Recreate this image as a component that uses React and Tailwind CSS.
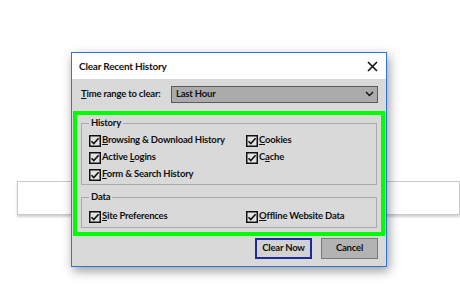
import React from "react";

function Check() {
  return (
    <svg width="12" height="12" viewBox="0 0 12 12" className="shrink-0">
      <rect x="0.75" y="0.75" width="10.5" height="10.5" fill="#e4e4e4" stroke="#111" strokeWidth="1.5" />
      <path d="M2.5 6.2 L4.8 8.6 L9.6 3.2" fill="none" stroke="#111" strokeWidth="1.6" />
    </svg>
  );
}

function Item({ pre = "", k, rest }) {
  return (
    <label className="flex items-center gap-[1px] h-[17px] whitespace-nowrap">
      <Check />
      <span>
        {pre}
        <span className="underline underline-offset-1">{k}</span>
        {rest}
      </span>
    </label>
  );
}

export default function App() {
  return (
    <div className="relative w-[460px] h-[291px] bg-white overflow-hidden font-['Lato',sans-serif] text-[9.5px] tracking-[-0.2px] font-bold text-[#111]">
      {/* page behind the dialog */}
      <div className="pt-[181px] pl-[17px]">
        <div className="h-[34px] border border-[#c9c9c9] bg-white shadow-[0_2px_2px_rgba(0,0,0,0.18)]" />
      </div>

      <div className="absolute left-[71px] top-[52px] w-[316px] h-[215px] border border-[#2f74d8] bg-[#d9d9d9] shadow-[2px_4px_10px_rgba(0,0,0,0.4)] flex flex-col">
        <div className="h-[26px] bg-white flex items-center justify-between pl-[7px] pr-[8px]">
          <span className="text-[10px]">Clear Recent History</span>
          <svg width="11" height="11" viewBox="0 0 11 11">
            <path d="M1 1 L10 10 M10 1 L1 10" stroke="#111" strokeWidth="1.6" />
          </svg>
        </div>

        <div className="flex items-center pl-[9px] pr-[8px] pt-[6px] h-[24px] whitespace-nowrap">
          <span className="w-[90px]">
            <span className="underline underline-offset-1">T</span>ime range to clear:
          </span>
          <div className="flex-1 h-[17px] border border-[#5a5a5a] bg-[#ababab] flex items-center justify-between pl-[4px] pr-[3px]">
            <span>Last Hour</span>
            <svg width="9" height="6" viewBox="0 0 9 6">
              <path d="M1 1 L4.5 4.5 L8 1" fill="none" stroke="#111" strokeWidth="1.4" />
            </svg>
          </div>
        </div>

        <div className="mt-[8px] mx-[1px] h-[125px] border-[4px] border-[#00ff00] px-[4px] pt-[2px] flex flex-col gap-[6px]">
          <fieldset className="border border-[#ababab] pl-[7px] pr-[4px] pb-[1px]">
            <legend className="px-[2px] leading-[12px]">History</legend>
            <div className="grid grid-cols-[157px_1fr] pt-[3px]">
              <Item k="B" rest="rowsing & Download History" />
              <Item k="C" rest="ookies" />
              <Item pre="Active " k="L" rest="ogins" />
              <Item pre="C" k="a" rest="che" />
              <Item k="F" rest="orm & Search History" />
            </div>
          </fieldset>
          <fieldset className="border border-[#ababab] pl-[7px] pr-[4px] pb-[2px]">
            <legend className="px-[2px] leading-[12px]">Data</legend>
            <div className="grid grid-cols-[157px_1fr] pt-[5px]">
              <Item k="S" rest="ite Preferences" />
              <Item k="O" rest="ffline Website Data" />
            </div>
          </fieldset>
        </div>

        <div className="flex justify-end gap-[9px] pr-[8px] pt-[2px]">
          <button className="w-[57px] h-[21px] border-2 border-[#1c2b9c] bg-[#d2d2d2] font-bold">
            Clear Now
          </button>
          <button className="w-[57px] h-[21px] border border-[#7a7a7a] bg-[#b3b3b3] font-bold">
            Cancel
          </button>
        </div>
      </div>
    </div>
  );
}
